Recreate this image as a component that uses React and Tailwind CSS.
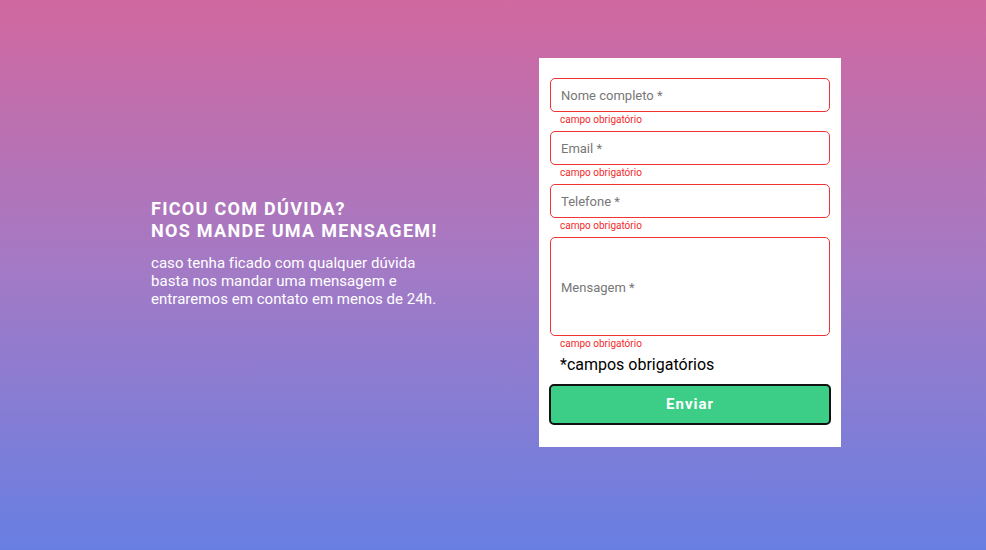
import { useState } from 'react';

const fields = [
  { name: 'nome', label: 'Nome completo *' },
  { name: 'email', label: 'Email *' },
  { name: 'telefone', label: 'Telefone *' },
];

function FieldError() {
  return (
    <p className="pl-[10px] mt-[2px] mb-[5px] text-[10px] leading-[12px] text-[#f22a2a]">
      campo obrigatório
    </p>
  );
}

export default function App() {
  const [values, setValues] = useState({ nome: '', email: '', telefone: '', mensagem: '' });

  const update = (name) => (e) => setValues((v) => ({ ...v, [name]: e.target.value }));

  return (
    <div className="min-h-[550px] w-full bg-[linear-gradient(180deg,#d1689f_0%,#a27ac6_50%,#687fe2_100%)] font-['Roboto',sans-serif]">
      <div className="flex items-center pl-[151px] pt-[58px]">
        <div className="w-[388px] text-white">
          <h1 className="text-[18px] leading-[22px] font-bold uppercase tracking-[1.3px]">
            Ficou com dúvida?
            <br />
            Nos mande uma mensagem!
          </h1>
          <p className="mt-[12px] text-[15px] leading-[18px] tracking-[0.05px]">
            caso tenha ficado com qualquer dúvida
            <br />
            basta nos mandar uma mensagem e
            <br />
            entraremos em contato em menos de 24h.
          </p>
        </div>

        <form
          onSubmit={(e) => e.preventDefault()}
          className="w-[302px] h-[389px] bg-white px-[11px] pt-[20px]"
        >
          {fields.map((f) => (
            <div key={f.name}>
              <input
                type="text"
                value={values[f.name]}
                onChange={update(f.name)}
                placeholder={f.label}
                className="block w-full h-[34px] rounded-[5px] border border-[#f23333] px-[10px] pt-[1px] text-[13px] text-[#333] placeholder:text-[#777] outline-none"
              />
              <FieldError />
            </div>
          ))}
          <div>
            <input
              type="text"
              value={values.mensagem}
              onChange={update('mensagem')}
              placeholder="Mensagem *"
              className="block w-full h-[99px] rounded-[5px] border border-[#f23333] px-[10px] pt-[1px] text-[13px] text-[#333] placeholder:text-[#777] outline-none"
            />
            <FieldError />
          </div>
          <p className="pl-[10px] mt-[2px] text-[16px] leading-[20px] text-black">*campos obrigatórios</p>
          <button
            type="submit"
            className="block -mx-[1px] mt-[9px] w-[282px] h-[41px] rounded-[5px] border-2 border-[#111] bg-[#3ccd87] text-white text-[15px] font-bold tracking-[1px]"
          >
            Enviar
          </button>
        </form>
      </div>
    </div>
  );
}
